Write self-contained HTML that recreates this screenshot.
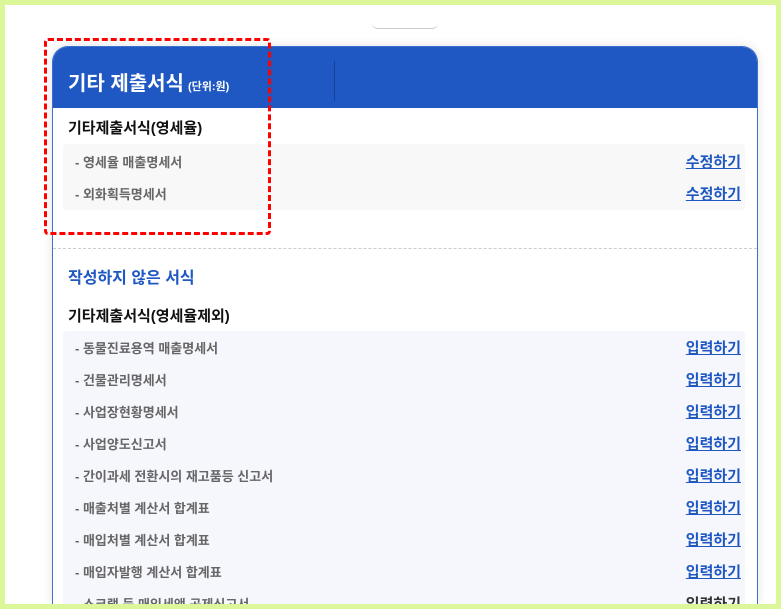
<!DOCTYPE html>
<html><head><meta charset="utf-8"><style>
*{margin:0;padding:0;box-sizing:border-box}
html,body{width:781px;height:609px;overflow:hidden}
body{background:#dcf79a;font-family:"Liberation Sans","Noto Sans CJK KR",sans-serif;position:relative}
.page{position:absolute;left:5px;top:5px;width:771px;height:599px;background:#fff;overflow:hidden}
.pill{position:absolute;left:367px;top:18px;width:66px;height:6px;border-bottom:1px solid #ccc;border-radius:0 0 8px 8px}
.card{position:absolute;left:47px;top:41px;width:706px;height:558px;border:1px solid #3c6fd0;border-bottom:none;border-radius:16px 16px 0 0;box-shadow:0 0 10px rgba(0,0,0,.12);background:#fff;overflow:hidden}
.hd{height:61px;background:#1f57c3;position:relative;color:#fff}
.hd h1{position:absolute;left:15px;top:20px;font-size:20px;font-weight:bold}
.hd h1 small{font-size:11px;font-weight:bold;margin-left:4px}
.hd .vl{position:absolute;left:281px;top:14px;width:1px;height:40px;background:#14429a}
.t{position:absolute;left:15px;font-size:15px;font-weight:bold;color:#111}
.box{position:absolute;left:10px;width:682px;border-radius:4px}
.row{height:32px;display:flex;justify-content:space-between;align-items:center;padding:0 4px 0 12px;font-size:13px;color:#555}
.row span{font-weight:bold;color:#666}
.row a{color:#1f57c3;font-size:15px;font-weight:bold;text-decoration:underline}
.sep{position:absolute;left:0;top:201px;width:100%;border-top:1px dashed #ccc}
.blue{position:absolute;left:15px;top:217px;font-size:16px;font-weight:bold;color:#1f57c3}
.red{position:absolute;left:39px;top:33px;width:227px;height:197px;border:3px dashed #f00;border-radius:4px}
</style></head><body><div class="page">
<div class="pill"></div>
<div class="card">
<div class="hd"><h1>기타 제출서식<small>(단위:원)</small></h1><div class="vl"></div></div>
<div class="t" style="top:70px">기타제출서식(영세율)</div>
<div class="box" style="top:97px;background:#f8f8f8;padding:1px 0">
<div class="row"><span>- 영세율 매출명세서</span><a>수정하기</a></div>
<div class="row"><span>- 외화획득명세서</span><a>수정하기</a></div>
</div>
<div class="sep"></div>
<div class="blue">작성하지 않은 서식</div>
<div class="t" style="top:258px">기타제출서식(영세율제외)</div>
<div class="box" style="top:284px;background:#f6f7fd;height:300px">
<div class="row"><span>- 동물진료용역 매출명세서</span><a>입력하기</a></div>
<div class="row"><span>- 건물관리명세서</span><a>입력하기</a></div>
<div class="row"><span>- 사업장현황명세서</span><a>입력하기</a></div>
<div class="row"><span>- 사업양도신고서</span><a>입력하기</a></div>
<div class="row"><span>- 간이과세 전환시의 재고품등 신고서</span><a>입력하기</a></div>
<div class="row"><span>- 매출처별 계산서 합계표</span><a>입력하기</a></div>
<div class="row"><span>- 매입처별 계산서 합계표</span><a>입력하기</a></div>
<div class="row"><span>- 매입자발행 계산서 합계표</span><a>입력하기</a></div>
<div class="row"><span>- 스크랩 등 매입세액 공제신고서</span><a style="color:#333;text-decoration:none">입력하기</a></div>
</div>
</div>
<div class="red"></div>
</div></body></html>
